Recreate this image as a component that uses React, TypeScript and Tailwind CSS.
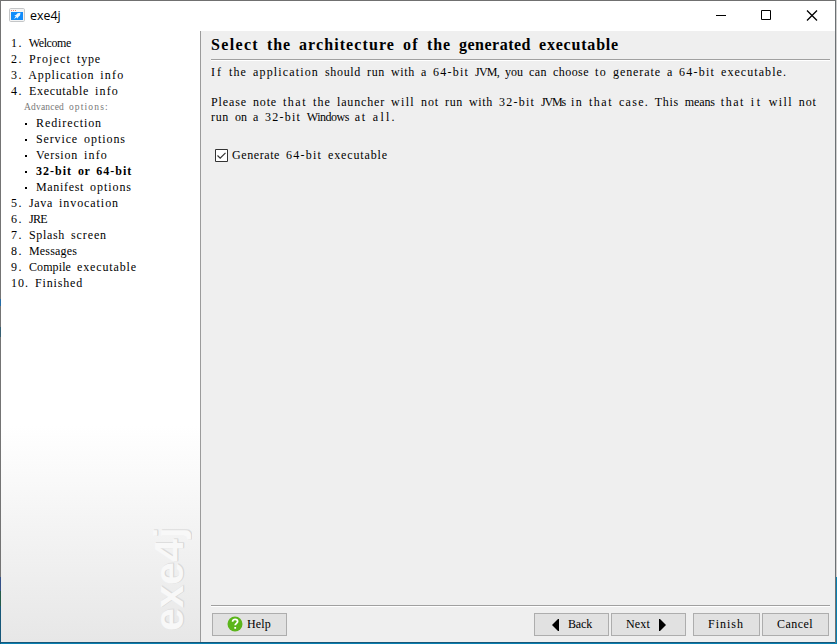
import { Fragment, useLayoutEffect, useRef } from "react";
import type { ReactNode } from "react";

type MonoProps = { children: string; cell?: number; className?: string };

// Sets each word on a fixed-width character grid, whatever the font's own advances are.
function Mono({ children, cell = 6, className = "text-[12px]" }: MonoProps) {
  const ref = useRef<HTMLSpanElement>(null);
  useLayoutEffect(() => {
    const root = ref.current;
    if (!root) return;
    const fit = () =>
      root.querySelectorAll<HTMLElement>("[data-word]").forEach((el) => {
        el.style.letterSpacing = "0px";
        const n = (el.textContent ?? "").length;
        const width = el.getBoundingClientRect().width;
        el.style.letterSpacing = `${(cell * n - width) / n}px`;
      });
    fit();
    document.fonts.ready.then(fit);
  }, [children, cell]);
  return (
    <span
      ref={ref}
      className={`whitespace-pre font-['Liberation_Serif',serif] ${className}`}
      style={{ wordSpacing: `${cell / 2}px` }}
    >
      {children.split(" ").map((word, i) => (
        <Fragment key={i}>
          {i > 0 && " "}
          <span data-word>{word}</span>
        </Fragment>
      ))}
    </span>
  );
}

const before = ["1. Welcome", "2. Project type", "3. Application info", "4. Executable info"];
const advanced = ["Redirection", "Service options", "Version info", "32-bit or 64-bit", "Manifest options"];
const after = ["5. Java invocation", "6. JRE", "7. Splash screen", "8. Messages", "9. Compile executable", "10. Finished"];

function Button({ children, className }: { children: ReactNode; className: string }) {
  return (
    <button className={`flex h-[23px] items-center border border-[#adadad] bg-[#e1e1e1] leading-[15px] ${className}`}>
      {children}
    </button>
  );
}

function TitleBar() {
  return (
    <header className="flex h-[30px] shrink-0 items-center bg-white pl-2">
      <svg className="mb-[2px]" width="16" height="14" viewBox="0 0 16 14">
        <rect x=".5" y=".5" width="15" height="13" rx="1.2" fill="#f4f4f4" stroke="#c4c6c8" />
        <path d="M2 2h1v1H2zM4 2h1v1H4zM6 2h1v1H6z" fill="#ef7d64" />
        <path d="M2 4h12v8H2z" fill="#118bfa" />
        <path d="M11.5 4.8 8.5 5.2 7 7 5.2 7.5 6.8 8.2 5 11 8 9.3 8.6 10.8 9.3 9 11 7.5Z" fill="#eef7ff" />
      </svg>
      <span className="ml-[5px] font-['Open_Sans',sans-serif] text-[12.4px] leading-[16px] text-black">exe4j</span>
      <svg className="ml-auto mr-[17px]" width="102" height="12" viewBox="0 0 102 12" fill="none" stroke="#000">
        <path d="M0 5.5h10M45.5.5h9v9h-9z" />
        <path d="M91 .5l10 10M101 .5l-10 10" strokeWidth="1.3" />
      </svg>
    </header>
  );
}

function Sidebar() {
  return (
    <aside className="relative w-[200px] shrink-0 border-r border-[#9b9b9b] bg-[linear-gradient(#fff_0,#fff_395px,#e7e7e7_100%)] pl-[10px] pt-[4px]">
      <ul className="leading-4">
        {before.map((t) => <li key={t} className="flex h-4"><Mono>{t}</Mono></li>)}
        <li className="flex h-4 pl-[13px] text-[#777]">
          <Mono cell={5} className="text-[9.5px]">Advanced options:</Mono>
        </li>
        {advanced.map((t) => (
          <li key={t} className="flex h-4 items-center pl-[14px]">
            <span className="mr-[9px] mt-[2px] size-[2px] bg-black" />
            <Mono className={t.startsWith("32") ? "text-[12px] font-bold" : "text-[12px]"}>{t}</Mono>
          </li>
        ))}
        {after.map((t) => <li key={t} className="flex h-4"><Mono>{t}</Mono></li>)}
      </ul>
      <span className="absolute bottom-[11px] right-[10px] rotate-180 font-['Liberation_Sans',sans-serif] text-[41px] font-bold leading-[42px] tracking-[0.3px] text-[#f8f8f8] [text-shadow:0_1px_0_#d6d6d6,1px_1px_0_#dedede] [writing-mode:vertical-rl]">
        exe4j
      </span>
    </aside>
  );
}

export default function App() {
  return (
    <div className="flex h-[644px] w-[837px] overflow-hidden bg-[#0a7fb0] text-black">
      <div className="flex w-px flex-col bg-[#747474]">
        <div className="mt-[299px] h-[7px] bg-[#246ca6]" />
        <div className="mt-[21px] h-[10px] bg-[#365f72]" />
        <div className="mt-[240px] h-[14px] bg-[#345087]" />
        <div className="h-[15px] bg-[#245c49]" />
        <div className="flex-1 bg-[#165779]" />
      </div>
      <div className="flex h-[643px] w-[834px] flex-col border-b border-t border-b-[#165779] border-t-[#707070] bg-[#efefef]">
        <TitleBar />
        <div className="flex min-h-0 flex-1">
          <Sidebar />
          <main className="flex flex-1 flex-col pl-[10px] pr-[5px]">
            <h1 className="flex h-[28px] items-center leading-4">
              <Mono cell={8} className="text-[16px] font-bold">Select the architecture of the generated executable</Mono>
            </h1>
            <div className="h-[2px] border-b border-t border-b-white border-t-[#a0a0a0]" />
            <div className="flex flex-col pt-[4px] leading-[15px]">
              <Mono>If the application should run with a 64-bit JVM, you can choose to generate a 64-bit executable.</Mono>
              <div className="mt-[15px] flex flex-col">
                <Mono>Please note that the launcher will not run with 32-bit JVMs in that case. This means that it will not</Mono>
                <Mono>run on a 32-bit Windows at all.</Mono>
              </div>
            </div>
            <label className="mt-[23px] flex items-center pl-1 leading-[15px]">
              <svg className="mr-[4px]" width="13" height="13" viewBox="0 0 13 13">
                <path d="M.5.5h12v12H.5z" fill="#fff" stroke="#333" />
                <path d="m2.5 6.5 2.7 2.7 5.3-5.4" fill="none" stroke="#333" strokeWidth="1.2" />
              </svg>
              <Mono>Generate 64-bit executable</Mono>
            </label>
            <footer className="mt-auto pb-[6px]">
              <div className="h-[2px] border-b border-t border-b-white border-t-[#a0a0a0]" />
              <div className="mt-[6px] flex pl-px pr-[1px]">
                <Button className="w-[75px] pl-[14px]">
                  <svg className="mb-px mr-1" width="16" height="16" viewBox="0 0 16 16">
                    <circle cx="8" cy="8" r="7.5" fill="#5bb51b" />
                    <path d="M5.6 5.8c0-3.4 5-3 5-.3 0 1.8-2.4 1.9-2.4 3.7M8.2 11v1.8" fill="none" stroke="#fff" strokeWidth="1.8" />
                  </svg>
                  <Mono>Help</Mono>
                </Button>
                <Button className="ml-auto w-[75px] pl-[17px]">
                  <svg className="mr-[9px]" width="7" height="12" viewBox="0 0 7 12"><path d="M7 0v12H6L0 6l6-6z" /></svg>
                  <Mono>Back</Mono>
                </Button>
                <Button className="ml-[2px] w-[75px] pl-[14px]">
                  <Mono>Next</Mono>
                  <svg className="ml-[9px]" width="7" height="12" viewBox="0 0 7 12"><path d="M0 0v12h1l6-6-6-6z" /></svg>
                </Button>
                <Button className="ml-[7px] w-[67px] pl-[14px]"><Mono>Finish</Mono></Button>
                <Button className="ml-[2px] w-[67px] pl-[14px]"><Mono>Cancel</Mono></Button>
              </div>
            </footer>
          </main>
        </div>
      </div>
      <div className="h-[643px] w-px bg-[#6c7174]" />
      <div className="h-[577px] w-px bg-[#cecece]" />
    </div>
  );
}
